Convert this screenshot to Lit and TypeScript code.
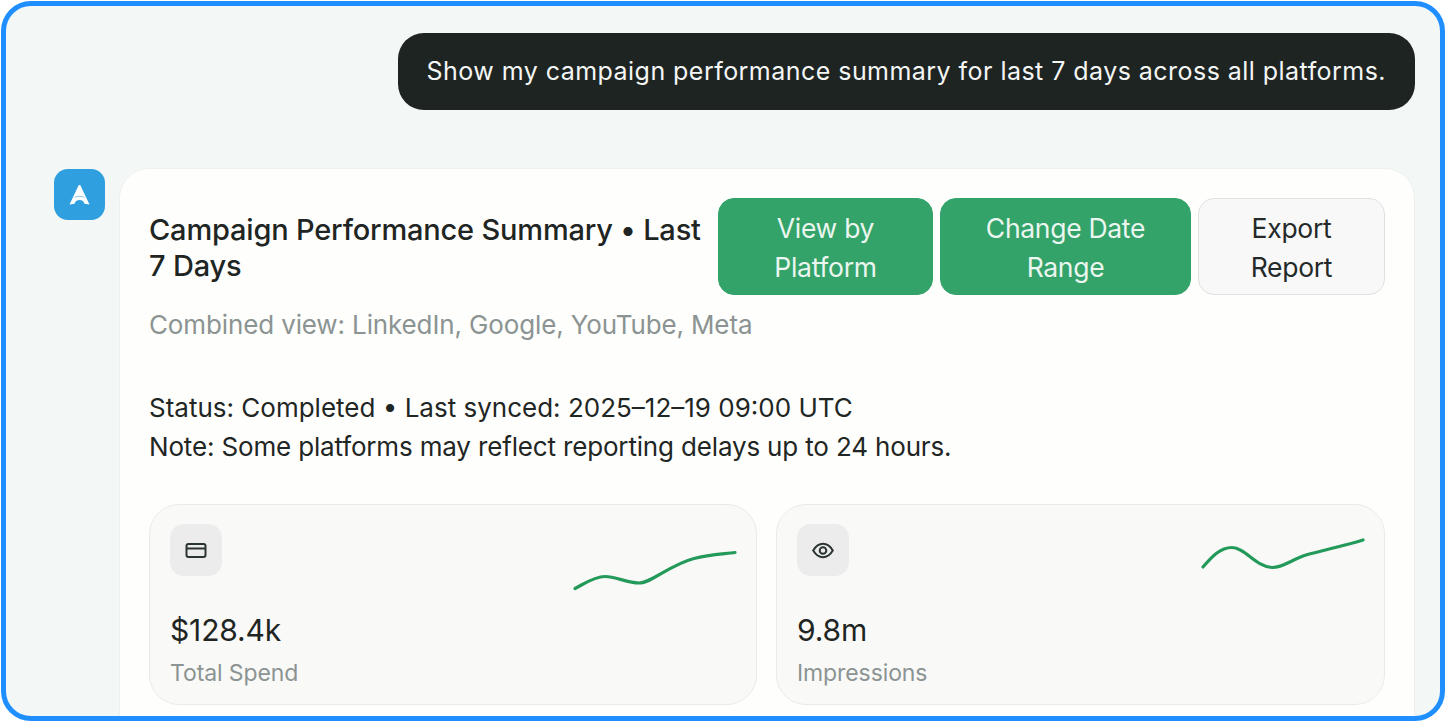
import { LitElement, css, html, svg } from "lit";
import { customElement } from "lit/decorators.js";

const metrics = [
  {
    value: "$128.4k",
    label: "Total Spend",
    icon: svg`<rect x="1.500" y="2" width="19" height="13" rx="2"/><path d="M1.500 6.500h19"/>`,
    line: "M1 37.500C10 33 20 25.500 31 25.500C42 25.500 53 32 65 32C78 32 95 14 120 7.500C135 3.500 150 3 161 1.500",
    offset: 27,
  },
  {
    value: "9.8m",
    label: "Impressions",
    icon: svg`<path d="M1.200 8.500C4 3.800 7 1.800 11 1.800S18 3.800 20.800 8.500C18 13.200 15 15.200 11 15.200S4 13.200 1.200 8.500Z"/><circle cx="11" cy="8.500" r="3.300"/>`,
    line: "M1 28C8 20 17 8.500 30 8.500C43 8.500 54 28 70 28.500C80 29 90 20.500 104 16C122 11 145 6 161 1",
    offset: 15,
  },
];

@customElement("metric-card")
export class MetricCard extends LitElement {
  static properties = {
    data: { attribute: false },
  };

  declare data: (typeof metrics)[number];

  static styles = css`
    :host {
      display: block;
      box-sizing: border-box;
      height: 201px;
      padding: 19.500px 20px;
      background: #f9f9f8;
      border: 1.500px solid #e9ebea;
      border-radius: 30px;
    }

    .top {
      display: flex;
      justify-content: space-between;
      align-items: flex-start;
      height: 52px;
    }

    .icon {
      display: flex;
      align-items: center;
      justify-content: center;
      width: 52px;
      height: 52px;
      background: #ececec;
      border-radius: 14px;
    }

    .icon svg {
      fill: none;
      stroke: #2a3431;
      stroke-width: 2;
    }

    .spark {
      fill: none;
      stroke: #239a5a;
      stroke-width: 3.200;
      stroke-linecap: round;
      stroke-linejoin: round;
      overflow: visible;
    }

    .value {
      margin-top: 34px;
      font-size: 30px;
      line-height: 40px;
      letter-spacing: -0.15px;
      color: #1e2523;
    }

    .label {
      margin-top: 8px;
      font-size: 23px;
      line-height: 30px;
      letter-spacing: -0.1px;
      color: #8b9492;
    }
  `;

  render() {
    const { value, label, icon, line, offset } = this.data;
    return html`
      <div class="top">
        <div class="icon">
          <svg width="22" height="17" viewBox="0 0 22 17">${icon}</svg>
        </div>
        <svg class="spark" width="162" height="70" viewBox="0 0 162 70">
          <path transform="translate(0 ${offset})" d=${line}></path>
        </svg>
      </div>
      <div class="value">${value}</div>
      <div class="label">${label}</div>
    `;
  }
}

@customElement("app-root")
export class AppRoot extends LitElement {
  static styles = css`
    :host {
      display: block;
      box-sizing: border-box;
      width: 1446px;
      height: 722px;
      padding: 1px;
      background: #ffffff;
      font-family: Inter, "Liberation Sans", sans-serif;
    }

    .frame {
      box-sizing: border-box;
      height: 720px;
      padding: 27px 26px 0 48px;
      overflow: hidden;
      background: #f3f7f5;
      border: 5px solid #1f8fff;
      border-radius: 30px;
    }

    .bubble {
      width: fit-content;
      margin: 0 -1px 0 auto;
      padding: 19px 29px 20px;
      font-size: 25px;
      line-height: 38px;
      letter-spacing: 0.46px;
      color: #f4f6f5;
      background: #1e2422;
      border-radius: 26px;
    }

    .chat {
      display: flex;
      align-items: flex-start;
      gap: 14px;
      margin-top: 58px;
    }

    .avatar {
      flex: none;
      display: flex;
      align-items: center;
      justify-content: center;
      width: 51px;
      height: 51px;
      margin-top: 1px;
      background: #2f9fdf;
      border-radius: 14px;
    }

    .card {
      flex: 1;
      box-sizing: border-box;
      height: 600px;
      padding: 29px 29px 0;
      background: #fefefd;
      border: 1px solid #eef1ef;
      border-radius: 30px;
    }

    .head {
      display: flex;
      align-items: center;
      gap: 16px;
    }

    h1 {
      flex: 1;
      margin: 0;
      padding-top: 2px;
      font-size: 29px;
      line-height: 36px;
      font-weight: 500;
      letter-spacing: -0.18px;
      color: #1e2523;
    }

    .actions {
      display: grid;
      grid-template-columns: 215px 251px 187px;
      gap: 7px;
    }

    .btn {
      box-sizing: border-box;
      height: 97px;
      font: inherit;
      font-size: 26.500px;
      line-height: 39px;
      letter-spacing: -0.3px;
      border-radius: 16px;
      border: 1.500px solid #33a36a;
      background: #33a36a;
      color: #eaf6ef;
      padding: 2px 30px 0;
    }

    .btn.ghost {
      background: #f8f8f8;
      border-color: #dfe1e0;
      color: #232a28;
    }

    .sub {
      margin-top: 12px;
      font-size: 26px;
      line-height: 36px;
      letter-spacing: -0.13px;
      color: #8b9492;
    }

    .status {
      margin-top: 45px;
      font-size: 26px;
      line-height: 39px;
      letter-spacing: -0.16px;
      color: #1f2624;
    }

    .synced {
      letter-spacing: 0;
    }

    .metrics {
      display: grid;
      grid-template-columns: 608px 609px;
      gap: 19px;
      margin-top: 37.500px;
    }
  `;

  render() {
    return html`
      <div class="frame">
        <div class="bubble">Show my campaign performance summary for last 7 days across all platforms.</div>
        <div class="chat">
          <div class="avatar">
            <svg width="21" height="20" viewBox="0 0 21 20">
              <path fill="#ffffff" d="M9.800 0H11.200L20.500 19.500L15.500 18.700C14.500 16 13 15 10.500 15C8 15 6.500 16 5.500 18.700L0.500 19.500Z"></path>
              <path fill="none" stroke="#2f9fdf" stroke-opacity="0.55" stroke-width="1" d="M5.500 12.500C8 10.800 13 10.800 15.500 12.500"></path>
            </svg>
          </div>
          <div class="card">
            <div class="head">
              <h1>Campaign Performance Summary • Last 7 Days</h1>
              <div class="actions">
                <button class="btn">View by Platform</button>
                <button class="btn">Change Date Range</button>
                <button class="btn ghost">Export Report</button>
              </div>
            </div>
            <div class="sub">Combined view: LinkedIn, Google, YouTube, Meta</div>
            <div class="status">
              <div class="synced">Status: Completed • Last synced: 2025–12–19 09:00 UTC</div>
              <div>Note: Some platforms may reflect reporting delays up to 24 hours.</div>
            </div>
            <div class="metrics">
              ${metrics.map((m) => html`<metric-card .data=${m}></metric-card>`)}
            </div>
          </div>
        </div>
      </div>
    `;
  }
}
